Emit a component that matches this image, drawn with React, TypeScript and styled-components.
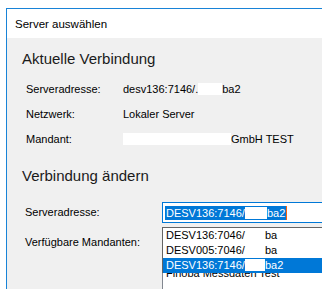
import React from "react";
import styled, { createGlobalStyle } from "styled-components";

const GlobalStyle = createGlobalStyle`
  html, body {
    margin: 0;
    padding: 0;
    background: #ffffff;
    overflow: hidden;
  }
  body {
    width: 322px;
    height: 289px;
    font-family: "Liberation Sans", Arial, sans-serif;
    color: #000000;
  }
`;

const Dialog = styled.div`
  margin: 8px 0 0 6px;
  width: 420px;
  height: 320px;
  border-left: 1px solid #1883d7;
  border-top: 1px solid #1883d7;
  display: flex;
  flex-direction: column;
`;

const TitleBar = styled.div`
  flex: none;
  height: 29px;
  display: flex;
  align-items: center;
  padding-left: 8px;
  background: #ffffff;
  font-size: 11.5px;
`;

const Content = styled.div`
  flex: 1;
  background: #f0f0f0;
  padding: 11px 0 0 15px;
`;

const SectionTitle = styled.h2<{ $gap?: number }>`
  margin: ${(p) => p.$gap ?? 0}px 0 0 0;
  font-size: 15px;
  font-weight: normal;
  line-height: 20px;
  color: #1a1a1a;
`;

const InfoList = styled.div`
  margin-top: 8px;
  padding-left: 4px;
  display: flex;
  flex-direction: column;
`;

const InfoRow = styled.div`
  display: flex;
  height: 25px;
  line-height: 25px;
  font-size: 11px;
`;

const InfoLabel = styled.span`
  width: 97px;
  flex: none;
`;

const Redacted = styled.span<{ $w: number }>`
  display: inline-block;
  width: ${(p) => p.$w}px;
  height: 12px;
  background: #ffffff;
  vertical-align: -2px;
`;

const FormRow = styled.div<{ $gap: number }>`
  display: flex;
  align-items: flex-start;
  margin-top: ${(p) => p.$gap}px;
  padding-left: 3px;
  font-size: 11px;
`;

const FormLabel = styled.span`
  width: 137px;
  flex: none;
  line-height: 21px;
`;

const ComboBox = styled.div`
  position: relative;
  box-sizing: border-box;
  width: 175px;
  height: 21px;
  border: 1px solid #0078d7;
  background: #ffffff;
  padding: 0 2px;
  display: flex;
  align-items: center;
`;

const Selection = styled.span`
  display: inline-flex;
  align-items: center;
  height: 14px;
  padding: 0 1px;
  background: #0078d7;
  color: #ffffff;
  white-space: nowrap;
`;

const Caret = styled.span`
  width: 1px;
  height: 14px;
  background: #f7630c;
`;

const Popup = styled.div`
  position: absolute;
  top: 24px;
  left: -1px;
  width: 190px;
  z-index: 2;
  background: #ffffff;
  border: 1px solid #646464;
  border-bottom: none;
`;

const PopupItem = styled.div<{ $active?: boolean }>`
  height: 15px;
  line-height: 15px;
  padding-left: 3px;
  white-space: nowrap;
  background: ${(p) => (p.$active ? "#0078d7" : "#ffffff")};
  color: ${(p) => (p.$active ? "#ffffff" : "#000000")};
`;

const Gap = styled.span<{ $w: number }>`
  display: inline-block;
  width: ${(p) => p.$w}px;
`;

const ListBox = styled.div`
  box-sizing: border-box;
  width: 190px;
  height: 80px;
  border: 1px solid #828790;
  background: #ffffff;
  padding-top: 33px;
`;

const ListItem = styled.div`
  height: 15px;
  line-height: 15px;
  padding-left: 3px;
  white-space: nowrap;
`;

export default function App() {
  return (
    <>
      <GlobalStyle />
      <Dialog>
        <TitleBar>Server auswählen</TitleBar>
        <Content>
          <SectionTitle>Aktuelle Verbindung</SectionTitle>
          <InfoList>
            <InfoRow>
              <InfoLabel>Serveradresse:</InfoLabel>
              <span>
                desv136:7146/.<Redacted $w={24} />ba2
              </span>
            </InfoRow>
            <InfoRow>
              <InfoLabel>Netzwerk:</InfoLabel>
              <span>Lokaler Server</span>
            </InfoRow>
            <InfoRow>
              <InfoLabel>Mandant:</InfoLabel>
              <span>
                <Redacted $w={108} />GmbH TEST
              </span>
            </InfoRow>
          </InfoList>

          <SectionTitle $gap={14}>Verbindung ändern</SectionTitle>
          <FormRow $gap={16}>
            <FormLabel>Serveradresse:</FormLabel>
            <ComboBox>
              <Selection>
                DESV136:7146/<Redacted $w={22} />ba2
              </Selection>
              <Caret />
              <Popup>
                <PopupItem>
                  DESV136:7046/<Gap $w={20} />ba
                </PopupItem>
                <PopupItem>
                  DESV005:7046/<Gap $w={20} />ba
                </PopupItem>
                <PopupItem $active>
                  DESV136:7146/<Redacted $w={20} />ba2
                </PopupItem>
              </Popup>
            </ComboBox>
          </FormRow>
          <FormRow $gap={9}>
            <FormLabel>Verfügbare Mandanten:</FormLabel>
            <ListBox>
              <ListItem>Finoba Messdaten Test</ListItem>
            </ListBox>
          </FormRow>
        </Content>
      </Dialog>
    </>
  );
}
